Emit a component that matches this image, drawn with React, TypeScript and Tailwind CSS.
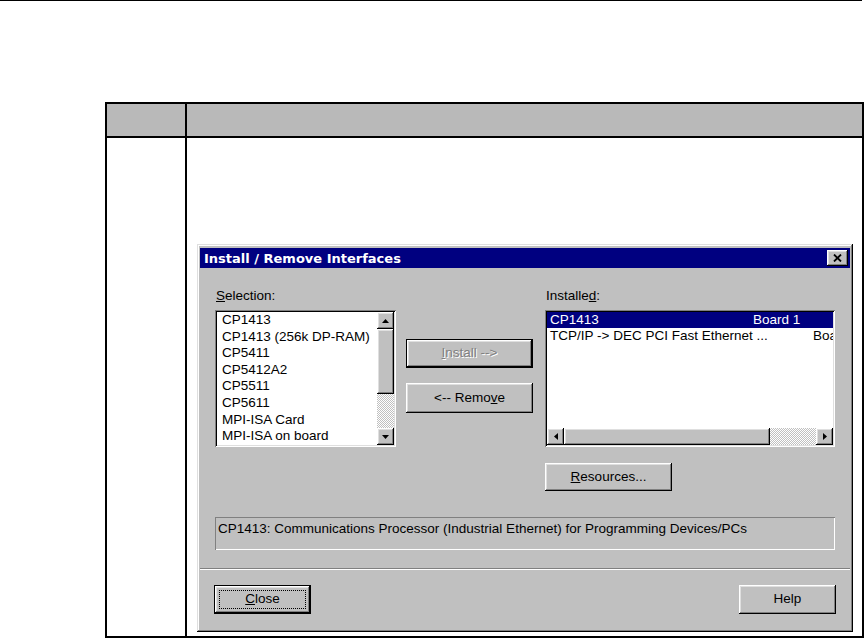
import React from 'react';

// Win95-style bevels
const raised =
  'bg-[#c0c0c0] shadow-[inset_-1px_-1px_0_#000,inset_1px_1px_0_#fff,inset_-2px_-2px_0_#808080,inset_2px_2px_0_#dfdfdf]';
const sunken =
  'shadow-[inset_1px_1px_0_#808080,inset_-1px_-1px_0_#fff,inset_2px_2px_0_#000,inset_-2px_-2px_0_#dfdfdf]';
const checker =
  'bg-[image:repeating-conic-gradient(#c0c0c0_0%_25%,#ffffff_0%_50%)] bg-[length:2px_2px]';

function Arrow({ dir }: { dir: 'up' | 'down' | 'left' | 'right' }) {
  const pts = {
    up: '3.5,0 7,4 0,4',
    down: '0,0 7,0 3.5,4',
    left: '4,0 4,7 0,3.5',
    right: '0,0 4,3.5 0,7',
  }[dir];
  const vertical = dir === 'up' || dir === 'down';
  return (
    <svg width={vertical ? 7 : 4} height={vertical ? 4 : 7} viewBox={vertical ? '0 0 7 4' : '0 0 4 7'}>
      <polygon points={pts} fill="#000" />
    </svg>
  );
}

function ArrowButton({ dir, className }: { dir: 'up' | 'down' | 'left' | 'right'; className: string }) {
  return (
    <div className={`${raised} ${className} flex items-center justify-center shrink-0`}>
      <Arrow dir={dir} />
    </div>
  );
}

interface ButtonProps {
  children: React.ReactNode;
  className?: string;
  framed?: boolean;
  focused?: boolean;
  disabled?: boolean;
}

function Button({ children, className = '', framed, focused, disabled }: ButtonProps) {
  return (
    <div className={`${framed ? 'border border-black' : ''} ${className} shrink-0`}>
      <div className={`${raised} relative w-full h-full flex items-center justify-center text-[13.5px]`}>
        {focused && <div className="absolute inset-[4px] border border-dotted border-black" />}
        <span className={disabled ? 'text-[#808080] [text-shadow:1px_1px_0_#fff]' : ''}>{children}</span>
      </div>
    </div>
  );
}

const selection = [
  'CP1413',
  'CP1413 (256k DP-RAM)',
  'CP5411',
  'CP5412A2',
  'CP5511',
  'CP5611',
  'MPI-ISA Card',
  'MPI-ISA on board',
];

function InterfacesDialog() {
  return (
    <div className="w-[656px] h-[388px] bg-[#c0c0c0] p-[3px] shadow-[inset_-1px_-1px_0_#000,inset_1px_1px_0_#dfdfdf,inset_-2px_-2px_0_#808080,inset_2px_2px_0_#fff]">
      <div className="h-[20px] mt-[1px] bg-[#000080] flex items-center justify-between pl-[4px] pr-[2px]">
        <span className="font-['DejaVu_Sans',sans-serif] font-bold text-[13px] text-white leading-none">
          Install / Remove Interfaces
        </span>
        <div className={`${raised} w-[21px] h-[16px] flex items-center justify-center`}>
          <svg width="9" height="8" viewBox="0 0 9 8">
            <path d="M1 0.5 L8 7.5 M8 0.5 L1 7.5" stroke="#000" strokeWidth="1.8" />
          </svg>
        </div>
      </div>

      <div className="pt-[20px]">
        <div className="px-[15px] flex">
          <div className="w-[181px]">
            <div className="text-[13.5px] leading-[16px] pl-[1px]">
              <span className="underline underline-offset-[1px]">S</span>election:
            </div>
            <div className={`${sunken} bg-white mt-[6px] h-[137px] p-[2px] flex`}>
              <div className="flex-1 pl-[5px] text-[13.5px] leading-[16.6px] overflow-hidden whitespace-nowrap">
                {selection.map((s) => (
                  <div key={s}>{s}</div>
                ))}
              </div>
              <div className="w-[17px] flex flex-col">
                <ArrowButton dir="up" className="h-[17px]" />
                <div className={`${raised} h-[65px]`} />
                <div className={`${checker} flex-1`} />
                <ArrowButton dir="down" className="h-[17px]" />
              </div>
            </div>
          </div>

          <div className="ml-[10px] w-[127px] pt-[51px] flex flex-col">
            <Button framed disabled className="h-[29px]">
              <span className="underline underline-offset-[1px]">I</span>nstall --&gt;
            </Button>
            <Button className="h-[30px] mt-[15px]">
              &lt;-- Remo<span className="underline underline-offset-[1px]">v</span>e
            </Button>
          </div>

          <div className="ml-[12px] w-[290px]">
            <div className="text-[13.5px] leading-[16px] pl-[1px]">
              Installe<span className="underline underline-offset-[1px]">d</span>:
            </div>
            <div className={`${sunken} bg-white mt-[6px] h-[137px] p-[2px] flex flex-col`}>
              <div className="flex-1 text-[13.5px] leading-[16px] overflow-hidden whitespace-nowrap">
                <div className="bg-[#000080] text-white flex pl-[3px]">
                  <span className="w-[203px]">CP1413</span>
                  <span>Board 1</span>
                </div>
                <div className="flex pl-[3px]">
                  <span className="w-[263px] shrink-0">TCP/IP -&gt; DEC PCI Fast Ethernet ...</span>
                  <span>Board 2</span>
                </div>
              </div>
              <div className="h-[17px] flex">
                <ArrowButton dir="left" className="w-[17px]" />
                <div className={`${raised} w-[206px]`} />
                <div className={`${checker} flex-1`} />
                <ArrowButton dir="right" className="w-[17px]" />
              </div>
            </div>
            <Button className="w-[127px] h-[28px] mt-[16px]">
              <span className="underline underline-offset-[1px]">R</span>esources...
            </Button>
          </div>
        </div>

        <div className="px-[15px] mt-[26px]">
          <div className="h-[33px] shadow-[inset_1px_1px_0_#808080,inset_-1px_-1px_0_#fff] pl-[3px] pt-[4px] text-[13.5px] leading-[16px] whitespace-nowrap overflow-hidden">
            CP1413: Communications Processor (Industrial Ethernet) for Programming Devices/PCs
          </div>
        </div>

        <div className="mt-[18px] h-[2px] border-t border-[#808080] border-b border-b-white" />

        <div className="px-[14px] mt-[15px] flex justify-between">
          <Button framed focused className="w-[97px] h-[29px]">
            <span className="underline underline-offset-[1px]">C</span>lose
          </Button>
          <Button className="w-[97px] h-[29px]">Help</Button>
        </div>
      </div>
    </div>
  );
}

export default function App() {
  return (
    <div className="w-[865px] h-[640px] bg-white overflow-hidden font-['Liberation_Sans',Arial,sans-serif] text-black">
      <div className="h-[1px] w-[862px] bg-black" />
      <div className="ml-[105px] mt-[101px] w-[759px] h-[536px] border-2 border-black flex flex-col">
        <div className="h-[34px] bg-[#b9b9b9] border-b-2 border-black flex">
          <div className="w-[80px] border-r-2 border-black" />
          <div className="flex-1" />
        </div>
        <div className="flex-1 flex">
          <div className="w-[80px] border-r-2 border-black" />
          <div className="flex-1 pl-[10px] pt-[106px]">
            <InterfacesDialog />
          </div>
        </div>
      </div>
    </div>
  );
}
